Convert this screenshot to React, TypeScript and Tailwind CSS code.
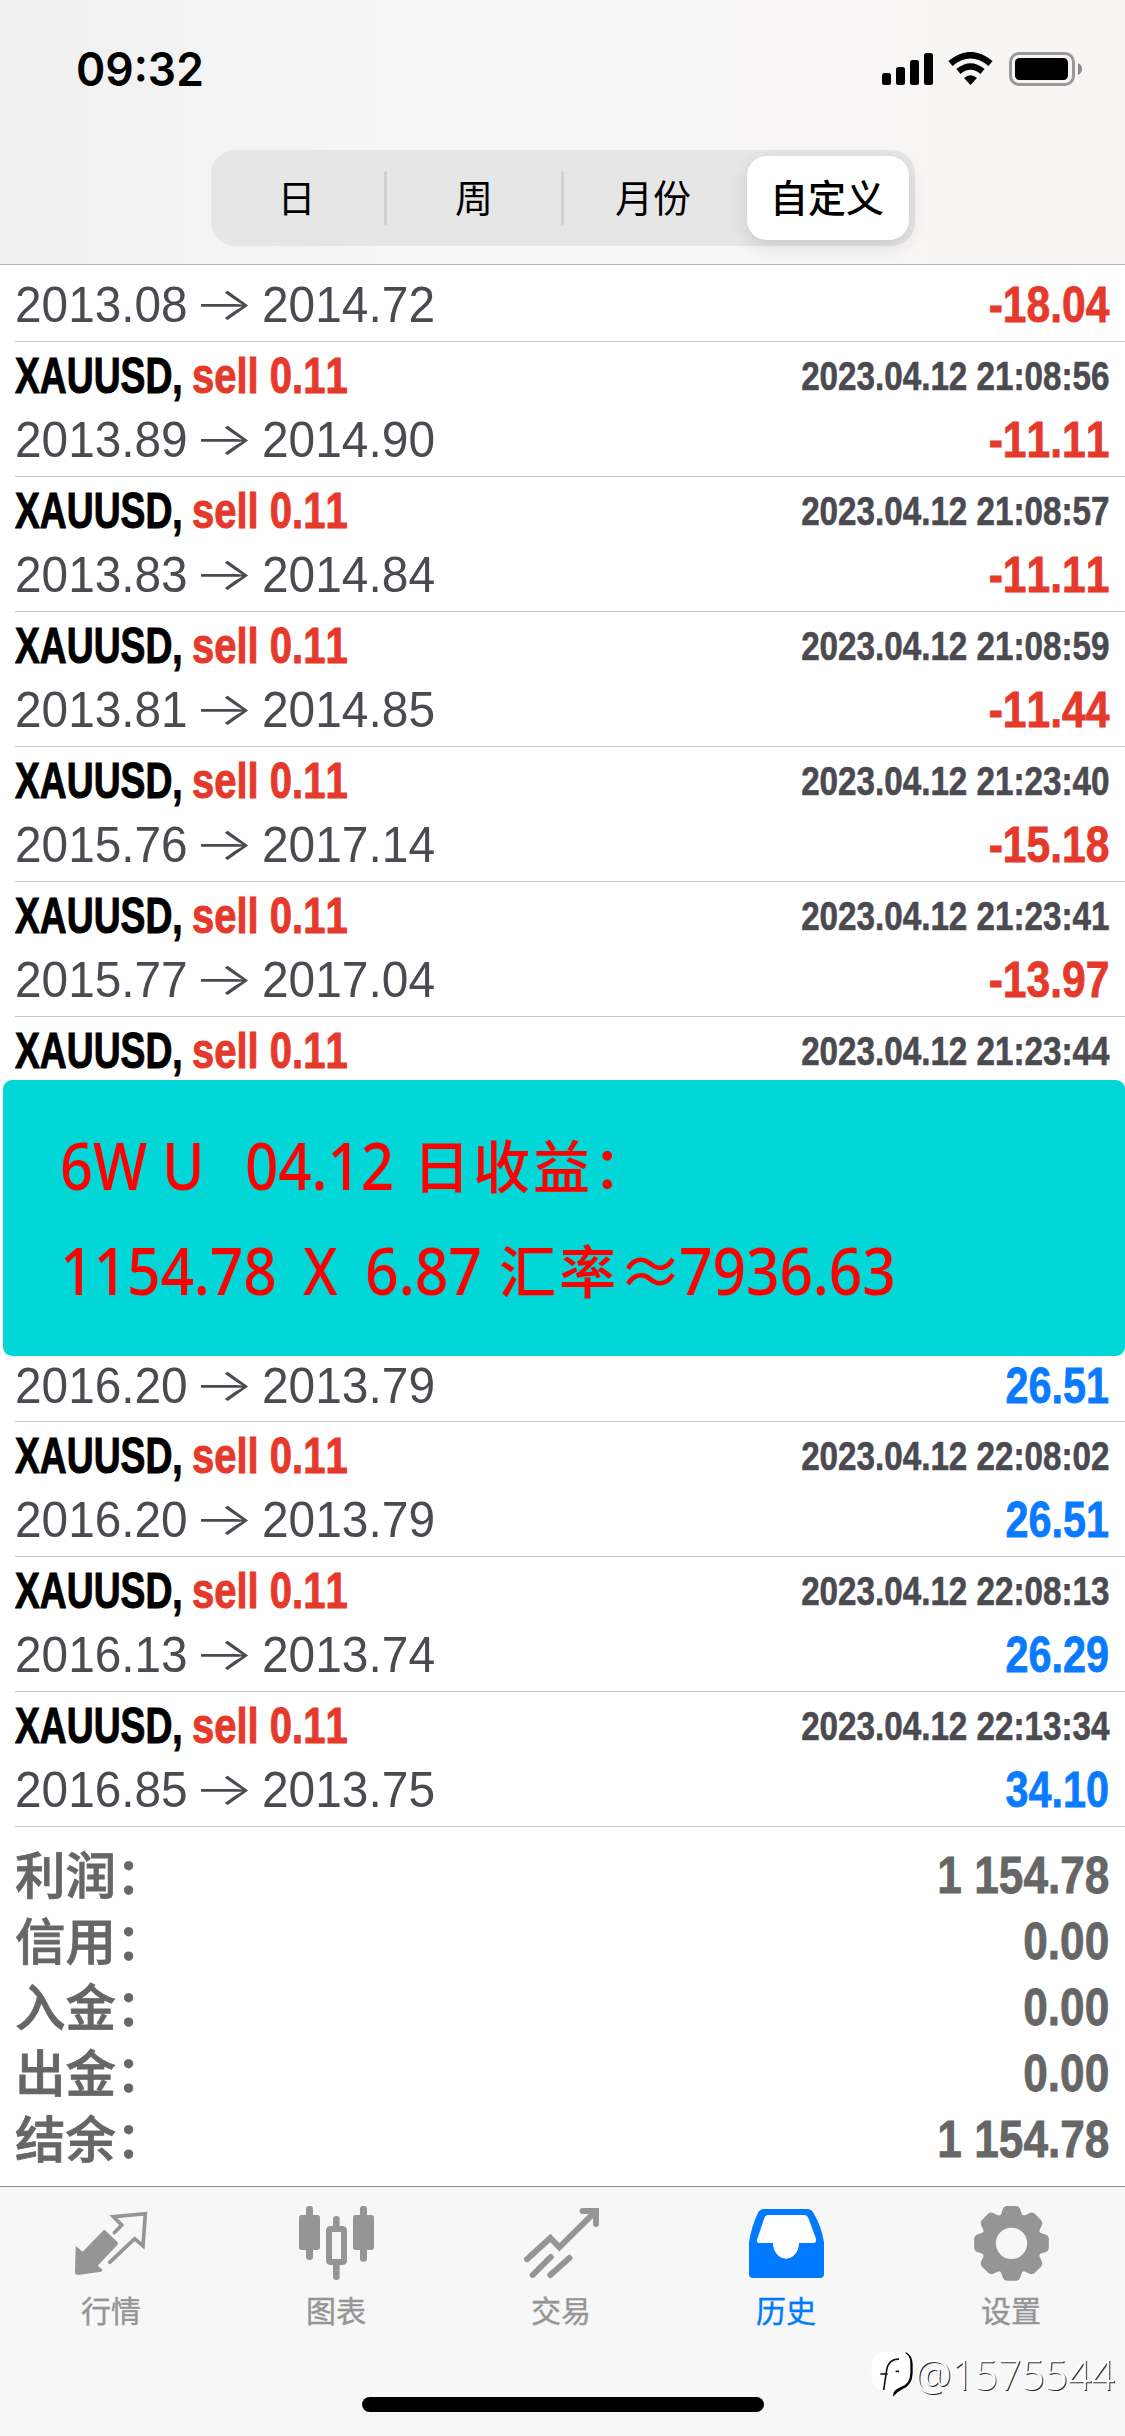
const deals = [
  { id: 1, open: "2013.89", close: "2014.90", time: "2023.04.12 21:08:56", profit: "-11.11" },
  { id: 2, open: "2013.83", close: "2014.84", time: "2023.04.12 21:08:57", profit: "-11.11" },
  { id: 3, open: "2013.81", close: "2014.85", time: "2023.04.12 21:08:59", profit: "-11.44" },
  { id: 4, open: "2015.76", close: "2017.14", time: "2023.04.12 21:23:40", profit: "-15.18" },
  { id: 5, open: "2015.77", close: "2017.04", time: "2023.04.12 21:23:41", profit: "-13.97" },
];

const lateDeals = [
  { id: 6, open: "2016.20", close: "2013.79", time: "2023.04.12 22:08:02", profit: "26.51" },
  { id: 7, open: "2016.13", close: "2013.74", time: "2023.04.12 22:08:13", profit: "26.29" },
  { id: 8, open: "2016.85", close: "2013.75", time: "2023.04.12 22:13:34", profit: "34.10" },
];

const totals = [
  { label: "利润", value: "1 154.78" },
  { label: "信用", value: "0.00" },
  { label: "入金", value: "0.00" },
  { label: "出金", value: "0.00" },
  { label: "结余", value: "1 154.78" },
];

type Deal = (typeof deals)[number];

function StatusBar() {
  return (
    <div className="flex h-[150px] items-start justify-between pl-[76px] pr-[43px] pt-[52px]">
      <span className="inline-block origin-left scale-x-[0.945] font-['Inter'] text-[47px] font-semibold leading-[34px] text-black">
        09:32
      </span>
      <svg className="h-[34px] w-[200px]" viewBox="0 0 200 34">
        <rect x="0" y="21" width="9" height="12" rx="2.5" />
        <rect x="14" y="15" width="9" height="18" rx="2.5" />
        <rect x="28" y="8" width="9" height="25" rx="2.5" />
        <rect x="42" y="1" width="9" height="32" rx="2.5" />
        <g fill="none" stroke="#000" strokeWidth="6.5">
          <path d="M68.5 11.5 Q88.5 -5 108.5 11.5" />
          <path d="M76.5 19.5 Q88.5 9.5 100.5 19.5" />
        </g>
        <path d="M82 26 Q88.5 20.5 95 26 L88.5 33Z" />
        <rect x="128.5" y="1.5" width="63" height="31" rx="8.5" fill="none" stroke="#999" strokeWidth="3" />
        <rect x="133" y="6" width="53" height="22" rx="4.5" />
        <path d="M196 11 Q200 13 200 17 Q200 21 196 23Z" fill="#888" />
      </svg>
    </div>
  );
}

function PeriodTabs() {
  return (
    <div className="ml-[211px] flex h-[96px] w-[704px] items-center rounded-[24px] bg-[#e6e6e6] font-['Noto_Sans_CJK_SC',sans-serif] text-[38px] leading-[56px] text-black">
      <div className="w-[173px] pb-[5px] pr-[2px] text-center">日</div>
      <div className="h-[54px] w-[3px] rounded-full bg-[#d0d0d2]" />
      <div className="w-[174px] pb-[5px] text-center">周</div>
      <div className="h-[54px] w-[3px] rounded-full bg-[#d0d0d2]" />
      <div className="w-[178px] pb-[5px] text-center">月份</div>
      <div className="ml-[5px] flex h-[84px] w-[162px] items-center justify-center rounded-[20px] bg-white pb-[5px] pr-[2px] font-medium shadow-[0_6px_18px_rgba(0,0,0,0.12)]">
        自定义
      </div>
    </div>
  );
}

function DealTitle({ time }: { time: string }) {
  return (
    <div className="flex h-[68px] justify-between whitespace-nowrap font-['Liberation_Sans',sans-serif] font-bold leading-[68px]">
      <div className="flex text-[50px]">
        <div className="w-[177px] text-black">
          <span className="inline-block origin-left scale-x-[0.745] [-webkit-text-stroke:1px_#000] [font-kerning:none]">
            XAUUSD,
          </span>
        </div>
        <span className="inline-block origin-left scale-x-[0.8] text-[#e53a2b] [-webkit-text-stroke:1px_#e53a2b] [font-kerning:none]">
          sell 0.11
        </span>
      </div>
      <span className="inline-block origin-right scale-x-[0.83] text-[40px] text-[#4a4a50] [-webkit-text-stroke:0.6px_#4a4a50] [font-kerning:none]">
        {time}
      </span>
    </div>
  );
}

function DealPrices({ open, close, profit }: Omit<Deal, "id" | "time">) {
  return (
    <div className="flex h-[58px] justify-between whitespace-nowrap font-['Liberation_Sans',sans-serif] text-[49.5px] leading-[59px]">
      <div className="flex text-[#4a4a50] [font-kerning:none]">
        <span className="block w-[178px] origin-left scale-x-[0.965]">{open}</span>
        <span className="block w-[69px] origin-left scale-x-[1.4] font-['Inter'] text-[46px] font-light leading-[56px]">
          →
        </span>
        <span className="block origin-left scale-x-[0.967]">{close}</span>
      </div>
      <span
        className={`inline-block origin-right font-bold [font-kerning:none] ${
          profit.startsWith("-")
            ? "scale-x-[0.86] text-[#e53a2b] [-webkit-text-stroke:0.8px_#e53a2b]"
            : "scale-x-[0.835] text-[#0a7aff] [-webkit-text-stroke:0.8px_#0a7aff]"
        }`}
      >
        {profit}
      </span>
    </div>
  );
}

function DealRow({ deal }: { deal: Deal }) {
  return (
    <div className="ml-[15px] h-[135px] border-b border-[#c6c6c8] pr-[16px]">
      <DealTitle time={deal.time} />
      <DealPrices open={deal.open} close={deal.close} profit={deal.profit} />
    </div>
  );
}

function Banner() {
  return (
    <div className="ml-[3px] h-[276px] rounded-[9px] bg-[#00d7d6] pl-[57px] pt-[32px] font-['Noto_Sans','Noto_Sans_CJK_SC',sans-serif] text-[65px] font-medium leading-[106px] text-[#ff0000]">
      <div className="flex h-[105px] whitespace-pre">
        <span className="block w-[143px] origin-left scale-x-[0.885]">6W U</span>
        <span className="ml-[42px] block w-[168px] origin-left scale-x-[0.895]">04.12</span>
        <span className="block font-['Noto_Sans_CJK_SC'] text-[57px] font-medium leading-[102px] tracking-[3px]">
          日收益：
        </span>
      </div>
      <div className="flex h-[105px] whitespace-pre">
        <span className="block w-[243px] origin-left scale-x-[0.9]">1154.78</span>
        <span className="block w-[62px] origin-left scale-x-[0.87]">X</span>
        <span className="block w-[134px] origin-left scale-x-[0.905]">6.87</span>
        <span className="block w-[119px] font-['Noto_Sans_CJK_SC'] text-[57px] font-medium leading-[102px] tracking-[3px]">
          汇率
        </span>
        <span className="block w-[61px] font-['Noto_Sans_CJK_SC'] font-normal leading-[102px]">≈</span>
        <span className="block origin-left scale-x-[0.9]">7936.63</span>
      </div>
    </div>
  );
}

function QuotesIcon() {
  return (
    <svg className="h-[76px] w-[75px] overflow-visible" viewBox="0 0 225 228">
      <path
        d="M2 120 L23 137 L84 74 Q88 70 92 74 L127 108 Q131 112 127 117 L68 179 L82 190 Q83 195 78 197 L10 207 Q0 207 0 198Z"
        fill="#959595"
      />
      <path
        d="M118 80 L140 57 L115 32 L211 23 L204 120 L179 98 L104 169"
        fill="none"
        stroke="#959595"
        strokeWidth="11"
        strokeLinecap="round"
      />
    </svg>
  );
}

function ChartIcon() {
  return (
    <svg className="h-[76px] w-[75px] overflow-visible" viewBox="0 0 225 228" fill="#959595">
      <rect x="-3" y="27" width="63" height="105" rx="8" />
      <rect x="18" y="0" width="21" height="162" rx="9" />
      <rect x="87" y="69" width="45" height="99" rx="4" fill="none" stroke="#959595" strokeWidth="18" />
      <path d="M99 64 V39 Q99 30 109 30 Q119 30 119 39 V64Z" />
      <path d="M99 173 V213 Q99 222 109 222 Q119 222 119 213 V173Z" />
      <rect x="159" y="27" width="63" height="105" rx="8" />
      <rect x="180" y="0" width="21" height="167" rx="9" />
    </svg>
  );
}

function TradeIcon() {
  return (
    <svg
      className="h-[76px] w-[75px] overflow-visible"
      viewBox="0 0 225 228"
      fill="none"
      stroke="#959595"
      strokeWidth="18"
      strokeLinecap="round"
    >
      <path d="M6 160 L76 96 L103 124 L211 17" />
      <path d="M173 15 H213 V54" />
      <path d="M77 153 L23 207 M133 156 L76 207" />
    </svg>
  );
}

function HistoryIcon() {
  return (
    <svg className="h-[76px] w-[75px] overflow-visible" viewBox="0 0 225 228">
      <path
        d="M42 9 H172 Q184 9 190 20 Q214 60 222 108 V204 Q222 216 210 216 H9 Q-3 216 -3 204 V108 Q5 60 24 20 Q30 9 42 9Z"
        fill="#007aff"
      />
      <path
        d="M55 27 H162 Q171 27 175 36 L198 98 Q200 111 190 111 H147 A39 47 0 0 1 69 111 H29 Q18 111 22 98 L43 36 Q46 27 55 27Z"
        fill="#fff"
      />
    </svg>
  );
}

function SettingsIcon() {
  return (
    <svg className="h-[76px] w-[75px] overflow-visible" viewBox="0 0 225 228">
      <g transform="translate(109.5 112)" fill="#959595">
        <circle r="69" fill="none" stroke="#959595" strokeWidth="44" />
        {[0, 45, 90, 135, 180, 225, 270, 315].map((angle) => (
          <path
            key={angle}
            transform={`rotate(${angle})`}
            d="M-36 -80 Q-30 -88 -27 -100 Q-23 -112 -13 -112 H13 Q23 -112 27 -100 Q30 -88 36 -80Z"
          />
        ))}
      </g>
    </svg>
  );
}

const tabs = [
  { label: "行情", icon: QuotesIcon, active: false },
  { label: "图表", icon: ChartIcon, active: false },
  { label: "交易", icon: TradeIcon, active: false },
  { label: "历史", icon: HistoryIcon, active: true },
  { label: "设置", icon: SettingsIcon, active: false },
];

function TabBar() {
  return (
    <nav className="relative h-[250px] border-t border-[#8e8e8e] bg-[#f7f7f7]">
      <div className="grid grid-cols-5 pt-[19px]">
        {tabs.map((tab) => {
          const Icon = tab.icon;

          return (
            <div key={tab.label} className="flex flex-col items-center">
              <Icon />
              <span
                className={`mb-[3px] mt-[5px] pr-[3px] font-['Noto_Sans_CJK_SC',sans-serif] text-[30px] leading-[44px] ${
                  tab.active ? "text-[#007aff]" : "text-[#959595]"
                } [-webkit-text-stroke:0.4px_currentColor]`}
              >
                {tab.label}
              </span>
            </div>
          );
        })}
      </div>
      <div className="ml-[362px] mt-[63px] h-[15px] w-[402px] rounded-full bg-black" />

      {/* author mark, sits over the bar */}
      <div className="absolute left-[871px] top-[161px] flex items-center">
        <svg className="h-[52px] w-[44px]" viewBox="0 0 132 156">
          <path d="M104 12 Q124 22 125 48 V76 Q124 112 94 124 Q80 130 66 146 Q66 124 88 112Z" />
          <path
            d="M40 12 H84 Q118 12 118 46 V74 Q118 108 88 118 Q72 124 63 138 V126 H40 Q2 124 2 88 V52 Q2 14 40 12Z"
            fill="#fff"
          />
          <path d="M38 126 L47 66 Q52 34 84 33 M28 78 H50 M74 70 H84" fill="none" stroke="#111" strokeWidth="5" />
        </svg>
        <span className="block origin-left scale-x-[0.95] font-['Noto_Sans'] text-[43px] font-light leading-[52px] text-white [text-shadow:1px_1px_0_#222]">
          @1575544
        </span>
      </div>
    </nav>
  );
}

export default function App() {
  return (
    <div className="flex h-[2436px] w-[1125px] flex-col overflow-hidden bg-white">
      <header className="h-[265px] shrink-0 border-b border-[#b2b2b2] bg-linear-to-r from-[#f0f0f0] via-[#f7f7f7] via-40% to-[#f8f4f4]">
        <StatusBar />
        <PeriodTabs />
      </header>

      <main className="h-[1921px] shrink-0">
        <div className="ml-[15px] h-[77px] border-b border-[#c6c6c8] pr-[16px] pt-[10px]">
          <DealPrices open="2013.08" close="2014.72" profit="-18.04" />
        </div>
        {deals.map((deal) => (
          <DealRow key={deal.id} deal={deal} />
        ))}
        <div className="ml-[15px] h-[63px] pr-[16px]">
          <DealTitle time="2023.04.12 21:23:44" />
        </div>
        <Banner />
        <div className="ml-[15px] h-[66px] border-b border-[#c6c6c8] pr-[16px]">
          <DealPrices open="2016.20" close="2013.79" profit="26.51" />
        </div>
        {lateDeals.map((deal) => (
          <DealRow key={deal.id} deal={deal} />
        ))}

        <div className="pl-[15px] pr-[16px] pt-[15px] font-['Liberation_Sans','Noto_Sans_CJK_SC',sans-serif] text-[#666]">
          {totals.map((item) => (
            <div key={item.label} className="flex h-[66px] justify-between leading-[66px]">
              <span className="text-[50.5px] font-medium leading-[69px] [-webkit-text-stroke:0.8px_#666]">
                {item.label}：
              </span>
              <span className="inline-block origin-right scale-x-[0.85] whitespace-nowrap text-[52px] font-bold [-webkit-text-stroke:0.8px_#666] [font-kerning:none]">
                {item.value}
              </span>
            </div>
          ))}
        </div>
      </main>

      <TabBar />
    </div>
  );
}
